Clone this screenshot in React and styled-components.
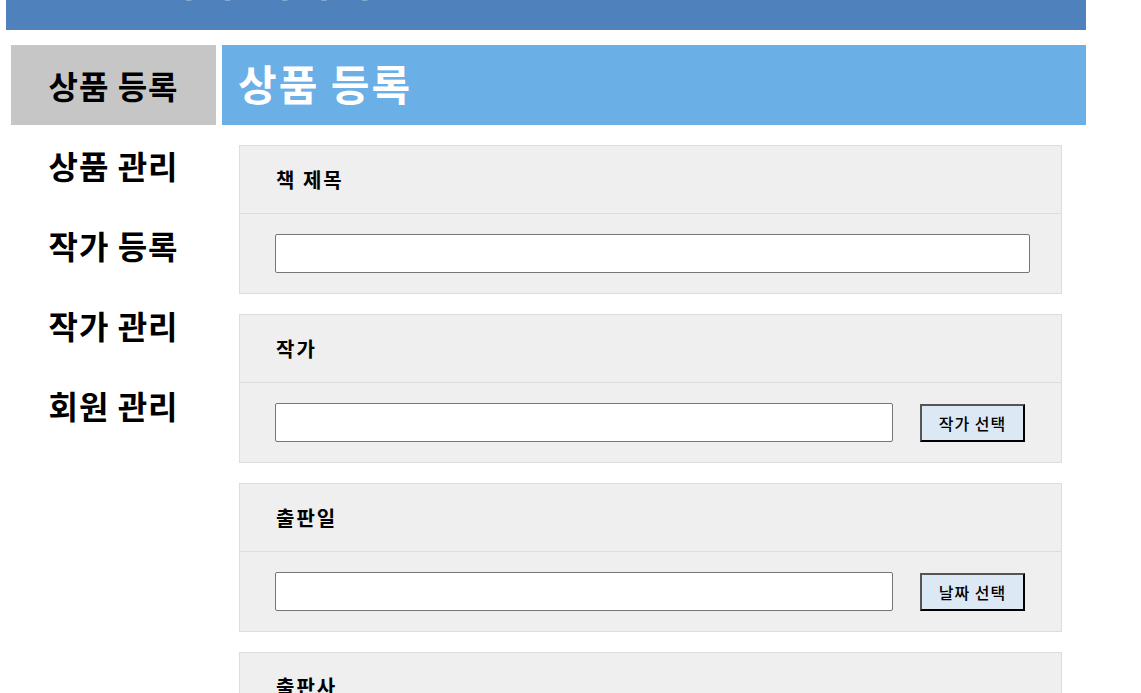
import React from 'react';
import styled, { createGlobalStyle } from 'styled-components';

const GlobalStyle = createGlobalStyle`
  body {
    margin: 0;
    background: #fff;
    font-family: 'Noto Sans CJK KR', 'Noto Sans', sans-serif;
    overflow: hidden;
  }
`;

const Page = styled.div`
  width: 1080px;
  margin: -62px 0 0 6px;
`;

const Header = styled.header`
  height: 92px;
  display: flex;
  align-items: flex-end;
  padding: 0 0 31px 112px;
  box-sizing: border-box;
  background: #4f81bd;
  color: #fff;

  h1 {
    margin: 0;
    font-size: 40px;
    line-height: 1;
    font-weight: 700;
    letter-spacing: 4px;
  }
`;

const Body = styled.div`
  display: flex;
  margin-top: 15px;
`;

const Sidebar = styled.nav`
  width: 216px;
  flex: none;
  display: flex;
  flex-direction: column;
`;

const MenuItem = styled.a`
  display: flex;
  align-items: center;
  justify-content: center;
  height: 80px;
  margin: 0 6px 0 5px;
  background: ${({ $active }) => ($active ? '#c6c6c6' : 'transparent')};
  color: #000;
  font-size: 32px;
  font-weight: 700;
  letter-spacing: 1px;
  text-decoration: none;
  cursor: pointer;
`;

const Main = styled.main`
  flex: 1;
  min-width: 0;
`;

const TitleBar = styled.h2`
  margin: 0;
  height: 80px;
  box-sizing: border-box;
  display: flex;
  align-items: center;
  padding: 0 0 5px 16px;
  background: #6aafe6;
  color: #fff;
  font-size: 42px;
  font-weight: 700;
  letter-spacing: 2px;
`;

const Form = styled.form`
  display: flex;
  flex-direction: column;
  gap: 20px;
  padding: 20px 24px 0 17px;
`;

const Panel = styled.section`
  background: #efefef;
  border: 1px solid #dddddd;
`;

const PanelHead = styled.div`
  height: 67px;
  display: flex;
  align-items: center;
  padding-left: 36px;
  border-bottom: 1px solid #dddddd;
  font-size: 20px;
  font-weight: 700;
  letter-spacing: 2px;
  color: #000;
`;

const PanelRow = styled.div`
  height: 79px;
  display: flex;
  align-items: center;
  padding-left: 35px;
  gap: 27px;
`;

const TextInput = styled.input`
  box-sizing: border-box;
  width: ${({ $w }) => $w}px;
  height: 39px;
  border: 1px solid #767676;
  border-radius: 2px;
  background: #fff;
  padding: 0 8px;
  font-size: 16px;
  font-family: inherit;
  outline: none;
`;

const PickButton = styled.button`
  box-sizing: border-box;
  width: 105px;
  height: 38px;
  border-width: 2px;
  border-style: solid;
  border-color: #555 #000 #000 #555;
  background: #dde8f5;
  color: #000;
  font-family: inherit;
  font-size: 16px;
  font-weight: 500;
  letter-spacing: 1px;
  cursor: pointer;
`;

const menu = ['상품 등록', '상품 관리', '작가 등록', '작가 관리', '회원 관리'];

const fields = [
  { label: '책 제목' },
  { label: '작가', button: '작가 선택' },
  { label: '출판일', button: '날짜 선택' },
  { label: '출판사' },
];

const App = () => (
  <>
    <GlobalStyle />
    <Page>
      <Header>
        <h1>관리자 페이지</h1>
      </Header>
      <Body>
        <Sidebar>
          {menu.map((item, i) => (
            <MenuItem key={item} $active={i === 0}>
              {item}
            </MenuItem>
          ))}
        </Sidebar>
        <Main>
          <TitleBar>상품 등록</TitleBar>
          <Form onSubmit={(e) => e.preventDefault()}>
            {fields.map((f) => (
              <Panel key={f.label}>
                <PanelHead>{f.label}</PanelHead>
                <PanelRow>
                  <TextInput type="text" $w={f.button ? 618 : 755} />
                  {f.button && <PickButton type="button">{f.button}</PickButton>}
                </PanelRow>
              </Panel>
            ))}
          </Form>
        </Main>
      </Body>
    </Page>
  </>
);

export default App;
